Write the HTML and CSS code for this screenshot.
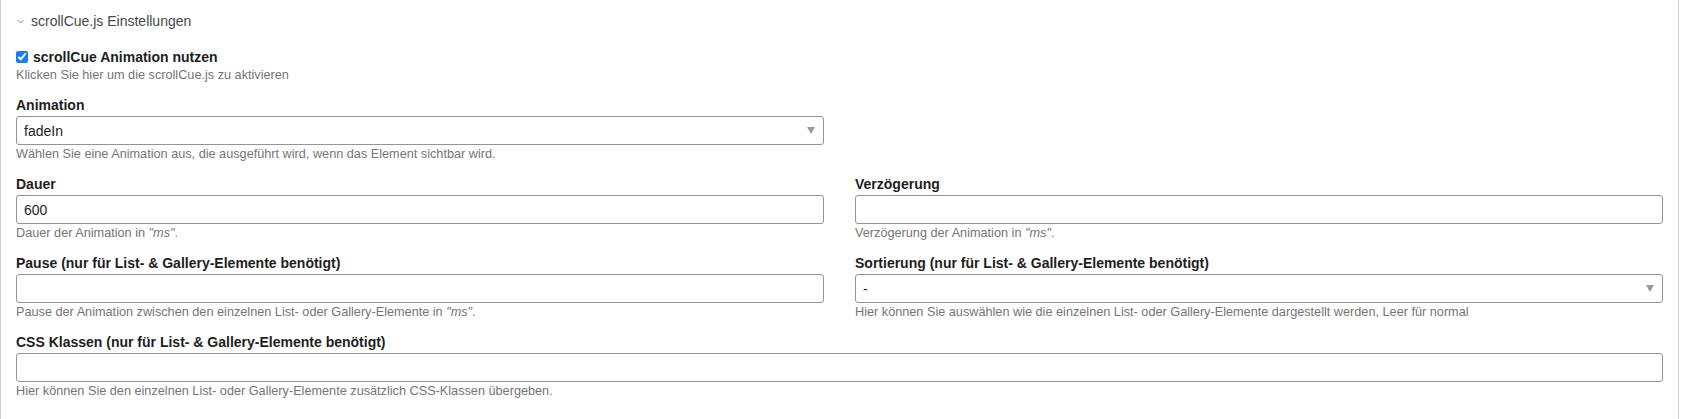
FILE: index.html
```html
<!DOCTYPE html>
<html lang="de">
<head>
    <meta charset="UTF-8">
    <meta name="viewport" content="width=device-width, initial-scale=1.0">
    <title>scrollCue.js Einstellungen</title>
    <link rel="stylesheet" href="styles.css">
</head>
<body>
    <div class="panel">
        <div class="panel-header">
            <svg class="chevron" width="7" height="5" viewBox="0 0 7 5">
                <path d="M0.5 1 L3.5 4 L6.5 1" fill="none" stroke="#8a8a8a" stroke-width="1"/>
            </svg>
            <span class="panel-title">scrollCue.js Einstellungen</span>
        </div>

        <div class="panel-body">
            <div class="field">
                <label class="check-label">
                    <input type="checkbox" checked>
                    <span>scrollCue Animation nutzen</span>
                </label>
                <div class="help">Klicken Sie hier um die scrollCue.js zu aktivieren</div>
            </div>

            <div class="field-row">
                <div class="field">
                    <label class="label">Animation</label>
                    <div class="select-wrap">
                        <select>
                            <option>fadeIn</option>
                        </select>
                    </div>
                    <div class="help help-nowrap">Wählen Sie eine Animation aus, die ausgeführt wird, wenn das Element sichtbar wird.</div>
                </div>
            </div>

            <div class="field-row">
                <div class="field">
                    <label class="label">Dauer</label>
                    <input type="text" value="600">
                    <div class="help">Dauer der Animation in <i>"ms"</i>.</div>
                </div>
                <div class="field">
                    <label class="label">Verzögerung</label>
                    <input type="text">
                    <div class="help">Verzögerung der Animation in <i>"ms"</i>.</div>
                </div>
            </div>

            <div class="field-row">
                <div class="field">
                    <label class="label">Pause (nur für List- &amp; Gallery-Elemente benötigt)</label>
                    <input type="text">
                    <div class="help">Pause der Animation zwischen den einzelnen List- oder Gallery-Elemente in <i>"ms"</i>.</div>
                </div>
                <div class="field">
                    <label class="label">Sortierung (nur für List- &amp; Gallery-Elemente benötigt)</label>
                    <div class="select-wrap">
                        <select>
                            <option>-</option>
                        </select>
                    </div>
                    <div class="help">Hier können Sie auswählen wie die einzelnen List- oder Gallery-Elemente dargestellt werden, Leer für normal</div>
                </div>
            </div>

            <div class="field">
                <label class="label">CSS Klassen (nur für List- &amp; Gallery-Elemente benötigt)</label>
                <input type="text">
                <div class="help">Hier können Sie den einzelnen List- oder Gallery-Elemente zusätzlich CSS-Klassen übergeben.</div>
            </div>
        </div>
    </div>
</body>
</html>
```

FILE: styles.css
```css
body {
    margin: 0;
    padding: 0;
    background-color: #fff;
    font-family: 'Liberation Sans', Arial, sans-serif;
    color: #1e1e1e;
}

.panel {
    width: 1679px;
    min-height: 100vh;
    box-sizing: border-box;
    border-left: 1px solid #d0d0d0;
    border-right: 1px solid #d0d0d0;
    padding: 0 15px;
}

.panel-header {
    height: 42px;
    display: flex;
    align-items: center;
    gap: 7px;
    padding-left: 1px;
}

.chevron {
    display: block;
    margin-top: 1px;
}

.panel-title {
    font-size: 14px;
    color: #474747;
}

.panel-body {
    padding-top: 6px;
    display: flex;
    flex-direction: column;
    gap: 13px;
}

.field-row {
    display: grid;
    grid-template-columns: 1fr 1fr;
    column-gap: 31px;
}

.field {
    display: flex;
    flex-direction: column;
    min-width: 0;
}

.label {
    font-size: 14px;
    font-weight: bold;
    line-height: 18px;
    margin-bottom: 2px;
}

.check-label {
    display: flex;
    align-items: center;
    gap: 5px;
    font-size: 14px;
    font-weight: bold;
    line-height: 18px;
}

.check-label input {
    width: 12px;
    height: 12px;
    margin: 0;
    accent-color: #1a7cf5;
}

.help {
    font-size: 12.7px;
    line-height: 16px;
    margin-top: 1px;
    color: #757575;
}

.help-nowrap {
    white-space: nowrap;
}

.help i {
    font-style: italic;
}

input[type="text"],
select {
    width: 100%;
    height: 29px;
    box-sizing: border-box;
    border: 1px solid #949494;
    border-radius: 3px;
    padding: 0 7px;
    font-family: 'Liberation Sans', Arial, sans-serif;
    font-size: 14px;
    color: #1e1e1e;
    background-color: #fff;
    margin: 0;
    outline: none;
}

select {
    appearance: none;
    -webkit-appearance: none;
    padding-right: 24px;
}

.select-wrap {
    position: relative;
}

.select-wrap::after {
    content: "";
    position: absolute;
    right: 9px;
    top: 11px;
    border-left: 4px solid transparent;
    border-right: 4px solid transparent;
    border-top: 7px solid #9a9a9a;
    pointer-events: none;
}
```
